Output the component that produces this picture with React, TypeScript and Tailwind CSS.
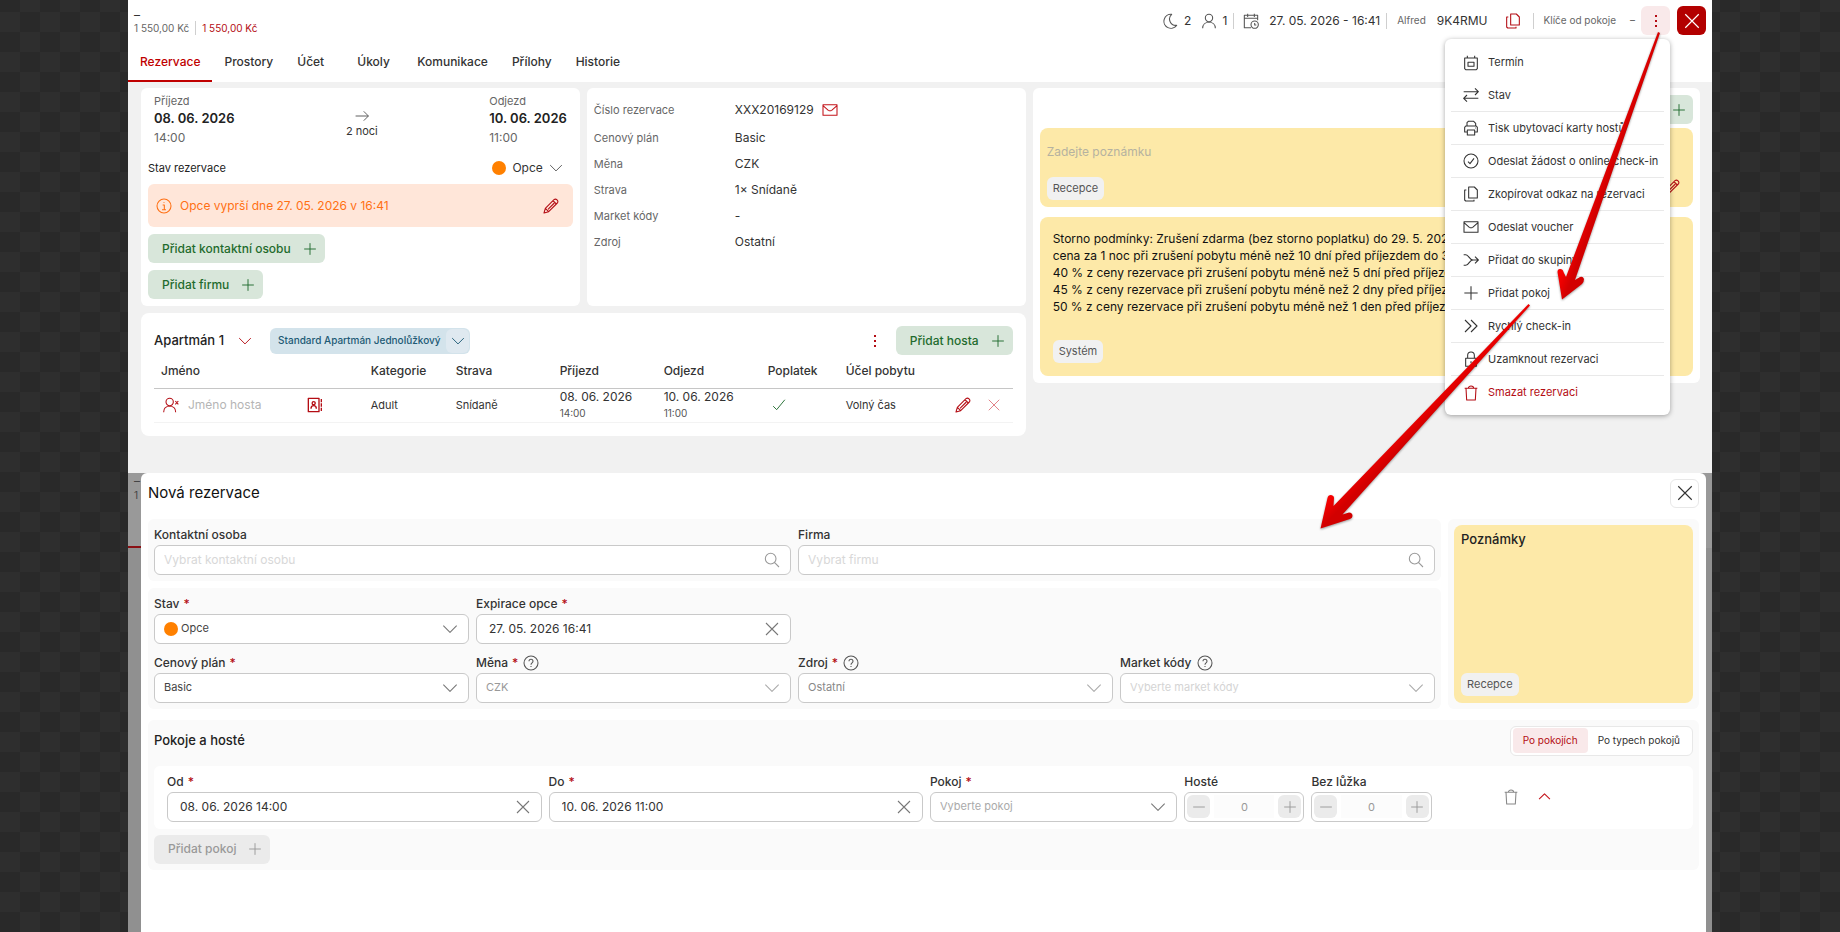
import { ReactNode, useState } from "react";
import clsx from "clsx";

const icons = {
  moon: "M14.5 2A10.5 10.5 0 1 0 22 18.5A9.5 9.5 0 0 1 14.5 2Z",
  user: "M12 13a5.5 5.5 0 1 0 0-11a5.5 5.5 0 0 0 0 11Z M2.500 23c0-5.5 4-9 9.500-9s9.500 3.500 9.500 9",
  calendarClock:
    "M7 1v5M17 1v5M2 8h20M12 22H2V3.500h20V11M17.500 23a5.500 5.500 0 1 0 0-11a5.500 5.500 0 0 0 0 11ZM17.500 15v3h2.500",
  calendar: "M2.500 4.500h19v16l-1.500 1.500h-16L2.500 20.500ZM6.500 1v3.500M17.500 1v3.500M7.500 11h9v6h-9Z",
  copy: "M8.500 1.500h8.500l4.500 4.500V18H8.500Z M5 6H2.500v15L4 22.500h12.500v-2",
  mail: "M1.500 4h21v16h-21Z M1.500 5.500l8 7q2.500 1.500 5 0l8-7",
  close: "M3 3l18 18M21 3L3 21",
  plus: "M12 2v20M2 12h20",
  minus: "M2 12h20",
  chevronDown: "M2 7l10 10L22 7",
  chevronUp: "M2 17L12 7l10 10",
  arrowRight: "M1 12h22M15 4l8 8l-8 8",
  swap: "M1 7h22M18 2l5 5l-5 5M23 17H1M6 12l-5 5l5 5",
  printer: "M6 9V4l2-2h8l3 3v4M6 18H2.500V11L4 9h16l1.500 2v7H18M6.500 15h11v7.500h-11ZM18 12h1",
  check: "M2 14l6 6L22 3",
  checkCircle: "M12 22.500a10.500 10.500 0 1 0 0-21a10.500 10.500 0 0 0 0 21ZM7.500 13l3 3l6-8",
  merge: "M1 4h3c5 0 5 8 11 8h8M1 20h3c5 0 5-8 11-8M18 7l5 5l-5 5",
  forward: "M3 3l9 9l-9 9M12 3l9 9l-9 9",
  lock: "M4 11h16v12H4ZM7 11V6.500a5 5 0 0 1 10 0V11M12 15.500v3",
  trash: "M2.500 5h19M8 5c0-4.500 8-4.500 8 0M4.500 5l1 17.500h13l1-17.500",
  pencil: "M1.500 22.500l2-7L16.500 2.500c3-2.500 7.500 2 5 5L8.500 20.500ZM3.500 15.500l5 5M15 4l5 5M7.500 17L17 7.500",
  info: "M12 22.500a10.500 10.500 0 1 0 0-21a10.500 10.500 0 0 0 0 21ZM10 10.500h2.500V17M9 17.500h6M12 6.500v1",
  help: "M12 22.500a10.500 10.500 0 1 0 0-21a10.500 10.500 0 0 0 0 21ZM9 9.500c0-4 6-4 6 0c0 2.500-3 2-3 5M12 16.500v1.500",
  search: "M10 18a8 8 0 1 0 0-16a8 8 0 0 0 0 16ZM16 16l6.500 6.500",
  userX: "M10 13a5.500 5.500 0 1 0 0-11a5.500 5.500 0 0 0 0 11ZM1 23c0-5.500 3.500-9 9-9s9 3.500 9 9M18.500 6l4.500 5M23 6l-4.500 5",
  contacts:
    "M2 2h16v20H2ZM21.500 3v5M21.500 9.500v5M21.500 16v5M10 11.500a2.300 2.300 0 1 0 0-4.600a2.300 2.300 0 0 0 0 4.600ZM6 17.500c0-6 8-6 8 0",
};

type IconName = keyof typeof icons;

function Icon({ name, size = 16, stroke = 1.6, className }: { name: IconName; size?: number; stroke?: number; className?: string }) {
  return (
    <svg
      width={size}
      height={size}
      viewBox="0 0 24 24"
      fill="none"
      stroke="currentColor"
      strokeWidth={stroke}
      strokeLinejoin="round"
      aria-hidden="true"
      className={clsx("shrink-0", className)}
    >
      <path d={icons[name]} />
    </svg>
  );
}

function Dots() {
  return (
    <svg width="14" height="14" viewBox="0 0 14 14" fill="currentColor" aria-hidden="true">
      <rect x="6" y="1" width="2" height="2" />
      <rect x="6" y="6" width="2" height="2" />
      <rect x="6" y="11" width="2" height="2" />
    </svg>
  );
}

const tabs = ["Rezervace", "Prostory", "Účet", "Úkoly", "Komunikace", "Přílohy", "Historie"];

const menuItems: { label: string; icon: IconName; line?: boolean; danger?: boolean }[] = [
  { label: "Termín", icon: "calendar" },
  { label: "Stav", icon: "swap", line: true },
  { label: "Tisk ubytovací karty hostů", icon: "printer", line: true },
  { label: "Odeslat žádost o online check-in", icon: "checkCircle", line: true },
  { label: "Zkopírovat odkaz na rezervaci", icon: "copy", line: true },
  { label: "Odeslat voucher", icon: "mail", line: true },
  { label: "Přidat do skupiny", icon: "merge", line: true },
  { label: "Přidat pokoj", icon: "plus", line: true },
  { label: "Rychlý check-in", icon: "forward", line: true },
  { label: "Uzamknout rezervaci", icon: "lock", line: true },
  { label: "Smazat rezervaci", icon: "trash", danger: true },
];

const details = [
  { label: "Cenový plán", value: "Basic" },
  { label: "Měna", value: "CZK" },
  { label: "Strava", value: "1× Snídaně" },
  { label: "Market kódy", value: "-" },
  { label: "Zdroj", value: "Ostatní" },
];

const stornoLines = [
  "Storno podmínky: Zrušení zdarma (bez storno poplatku) do 29. 5. 2026",
  "cena za 1 noc při zrušení pobytu méně než 10 dní před příjezdem do 3. 6.",
  "40 % z ceny rezervace při zrušení pobytu méně než 5 dní před příjezdem",
  "45 % z ceny rezervace při zrušení pobytu méně než 2 dny před příjezdem",
  "50 % z ceny rezervace při zrušení pobytu méně než 1 den před příjezdem",
];

function Divider() {
  return <span className="h-4 w-px bg-[#cfcfcf]" />;
}

function AddButton({ children, disabled }: { children: ReactNode; disabled?: boolean }) {
  return (
    <button
      disabled={disabled}
      className={clsx(
        "flex h-[29px] w-fit items-center gap-3 rounded-md pr-2 pl-3.5 text-xs font-medium",
        disabled ? "bg-[#ebebeb] text-[#999]" : "bg-[#d8e6da] text-[#1f6b2d]"
      )}
    >
      {children}
      <Icon name="plus" size={14} />
    </button>
  );
}

function Chip({ children }: { children: ReactNode }) {
  return <span className="flex h-[23px] w-fit items-center rounded-md bg-[#f1f1f1] px-[6px] text-[11px] text-[#555]">{children}</span>;
}

function ReservationMenu() {
  return (
    <div className="absolute top-[33px] right-0 z-10 w-[225px] rounded-md bg-white px-[6px] pt-[7px] pb-[6px] shadow-[0_1px_5px_rgba(0,0,0,0.35)]">
      {menuItems.map((item) => (
        <button
          key={item.label}
          className={clsx(
            "flex h-[33px] w-full items-center gap-[9px] pl-3 text-left text-[11px] whitespace-nowrap",
            item.line && "border-b border-[#e9e9e9]",
            item.danger ? "text-[#b40d14]" : "text-[#333]"
          )}
        >
          <Icon name={item.icon} />
          {item.label}
        </button>
      ))}
    </div>
  );
}

function Header() {
  const [active, setActive] = useState("Rezervace");
  const [open, setOpen] = useState(true);

  return (
    <header className="bg-white">
      <div className="flex h-[44px] items-start justify-between pr-[6px] pl-[6px]">
        <div className="pt-[9px] text-[10px] leading-3">
          <div className="text-xs leading-3 text-[#333]">–</div>
          <div className="flex items-center gap-[6px] text-[#666]">
            1 550,00 Kč <span className="h-3.5 w-px bg-[#cfcfcf]" /> <span className="text-[#b40d14]">1 550,00 Kč</span>
          </div>
        </div>
        <div className="flex items-center pt-[6px] text-xs text-[#333]">
          <Icon name="moon" className="mr-[6px] text-[#555]" />
          <span className="mr-2.5">2</span>
          <Icon name="user" className="mr-[5px] text-[#555]" />
          <span className="mr-[6px]">1</span>
          <Divider />
          <Icon name="calendarClock" className="mr-2.5 ml-[9px] text-[#555]" />
          <span className="mr-[6px]">27. 05. 2026 - 16:41</span>
          <Divider />
          <span className="mr-[11px] ml-2.5 text-[10px] text-[#666]">Alfred</span>
          <span className="mr-[17px]">9K4RMU</span>
          <button aria-label="Kopírovat" className="mr-3 text-[#b40d14]">
            <Icon name="copy" />
          </button>
          <Divider />
          <span className="mr-3.5 ml-2.5 text-[10px] text-[#666]">Klíče od pokoje</span>
          <span className="mr-[6px] text-[10px] text-[#555]">–</span>
          <div className="relative mr-[7px]">
            <button
              aria-label="Menu"
              onClick={() => setOpen(!open)}
              className="flex size-[29px] items-center justify-center rounded-md bg-[#f9e9ea] text-[#b40d14]"
            >
              <Dots />
            </button>
            {open && <ReservationMenu />}
          </div>
          <button aria-label="Zavřít" className="flex size-[29px] items-center justify-center rounded-md bg-[#b30000] text-white">
            <Icon name="close" size={18} />
          </button>
        </div>
      </div>
      <nav className="flex">
        {tabs.map((tab) => (
          <button
            key={tab}
            onClick={() => setActive(tab)}
            className={clsx(
              "h-[38px] min-w-[60px] border-b-2 px-3 text-left text-xs font-medium",
              active === tab ? "border-[#c00000] text-[#c00000]" : "border-transparent text-[#333]"
            )}
          >
            {tab}
          </button>
        ))}
      </nav>
    </header>
  );
}

function StayCard() {
  return (
    <section className="rounded-md bg-white p-[7px]">
      <div className="flex items-start justify-between px-[6px]">
        <div>
          <div className="text-[11px] leading-3 text-[#666]">Příjezd</div>
          <div className="text-[13px] leading-[22px] font-semibold text-[#222]">08. 06. 2026</div>
          <div className="text-xs leading-[18px] text-[#666]">14:00</div>
        </div>
        <div className="flex flex-col items-center pt-[14px] text-[11px] text-[#333]">
          <Icon name="arrowRight" size={14} className="text-[#555]" />
          2 noci
        </div>
        <div>
          <div className="text-[11px] leading-3 text-[#666]">Odjezd</div>
          <div className="text-[13px] leading-[22px] font-semibold text-[#222]">10. 06. 2026</div>
          <div className="text-xs leading-[18px] text-[#666]">11:00</div>
        </div>
      </div>
      <div className="mt-[7px] flex h-7 items-center justify-between text-[11px] text-[#222]">
        Stav rezervace
        <button className="flex items-center gap-[6px] pr-2.5 text-xs text-[#333]">
          <span className="size-3.5 rounded-full bg-[#ff8000]" />
          Opce
          <Icon name="chevronDown" size={14} className="text-[#555]" />
        </button>
      </div>
      <div className="mt-[2px] flex h-[43px] items-center rounded-md bg-[#ffe6d9] px-2 text-xs text-[#ff7014]">
        <Icon name="info" />
        <span className="ml-2 flex-1">Opce vyprší dne 27. 05. 2026 v 16:41</span>
        <button aria-label="Upravit" className="pr-[6px] text-[#b40d14]">
          <Icon name="pencil" />
        </button>
      </div>
      <div className="mt-[7px] flex flex-col gap-[7px]">
        <AddButton>Přidat kontaktní osobu</AddButton>
        <AddButton>Přidat firmu</AddButton>
      </div>
    </section>
  );
}

function DetailCard() {
  return (
    <section className="rounded-md bg-white p-[7px]">
      <dl className="text-xs text-[#333]">
        <div className="flex h-[30px] items-center">
          <dt className="w-[141px] text-[11px] text-[#666]">Číslo rezervace</dt>
          <dd className="flex items-center gap-2">
            XXX20169129 <Icon name="mail" className="text-[#c4141b]" />
          </dd>
        </div>
        {details.map((d) => (
          <div key={d.label} className="flex h-[26px] items-center">
            <dt className="w-[141px] text-[11px] text-[#666]">{d.label}</dt>
            <dd>{d.value}</dd>
          </div>
        ))}
      </dl>
    </section>
  );
}

function GuestsCard() {
  return (
    <section className="rounded-lg bg-white p-[13px]">
      <div className="flex items-center">
        <h2 className="text-[13px] font-medium text-[#222]">Apartmán 1</h2>
        <button aria-label="Sbalit" className="ml-3.5 text-[#b40d14]">
          <Icon name="chevronDown" size={14} />
        </button>
        <button className="ml-[18px] flex h-[26px] items-center gap-[6px] rounded-md bg-[#d3e3eb] pr-px pl-2 text-[10px] font-medium text-[#1d5a75]">
          Standard Apartmán Jednolůžkový
          <span className="flex h-6 w-[23px] items-center justify-center rounded-md bg-[#dfe9f0]">
            <Icon name="chevronDown" size={14} />
          </span>
        </button>
        <button aria-label="Další" className="mr-3.5 ml-auto text-[#b40d14]">
          <Dots />
        </button>
        <AddButton>Přidat hosta</AddButton>
      </div>
      <table className="w-full table-fixed text-left text-xs text-[#333]">
        <thead>
          <tr className="h-[33px] border-b border-[#c6c6c6] [&>th]:pl-[7px] [&>th]:font-medium">
            <th>Jméno</th>
            <th className="w-[85px]">Kategorie</th>
            <th className="w-[104px]">Strava</th>
            <th className="w-[104px]">Příjezd</th>
            <th className="w-[104px]">Odjezd</th>
            <th className="w-[78px]">Poplatek</th>
            <th className="w-[109px]">Účel pobytu</th>
            <th className="w-[65px]" aria-label="Akce" />
          </tr>
        </thead>
        <tbody>
          <tr className="h-[34px] border-b border-[#f3f3f3] [&>td]:pl-[7px]">
            <td>
              <div className="flex items-center pr-[41px] pl-[2px]">
                <Icon name="userX" className="text-[#b40d14]" />
                <input aria-label="Jméno hosta" placeholder="Jméno hosta" className="ml-[9px] min-w-0 flex-1 outline-none placeholder:text-[#b5b5b5]" />
                <button aria-label="Kontakty" className="text-[#b40d14]">
                  <Icon name="contacts" stroke={2} />
                </button>
              </div>
            </td>
            <td className="text-[11px]">Adult</td>
            <td className="text-[11px]">Snídaně</td>
            <td>
              <div className="leading-4">08. 06. 2026</div>
              <div className="text-[10px] leading-4 text-[#555]">14:00</div>
            </td>
            <td>
              <div className="leading-4">10. 06. 2026</div>
              <div className="text-[10px] leading-4 text-[#555]">11:00</div>
            </td>
            <td>
              <Icon name="check" size={14} className="ml-1 text-[#1f6b2d]" />
            </td>
            <td className="text-[11px]">Volný čas</td>
            <td>
              <div className="flex items-center gap-4">
                <button aria-label="Upravit hosta" className="text-[#b40d14]">
                  <Icon name="pencil" />
                </button>
                <button aria-label="Odebrat hosta" className="text-[#e07a80]">
                  <Icon name="close" size={14} />
                </button>
              </div>
            </td>
          </tr>
        </tbody>
      </table>
    </section>
  );
}

function NotesCard() {
  return (
    <section className="flex flex-col self-start rounded-md bg-white p-[7px]">
      <button aria-label="Přidat poznámku" className="flex size-[29px] items-center justify-center self-end rounded-md bg-[#d8e6da] text-[#1f6b2d]">
        <Icon name="plus" size={14} />
      </button>
      <div className="mt-1 rounded-lg bg-[#fde9a8] p-[7px]">
        <input aria-label="Poznámka" placeholder="Zadejte poznámku" className="block h-8 w-full text-xs outline-none placeholder:text-[#b5b2a0]" />
        <div className="mt-[10px] flex items-center justify-between pr-[6px]">
          <Chip>Recepce</Chip>
          <button aria-label="Upravit poznámku" className="pb-1 text-[#b40d14]">
            <Icon name="pencil" />
          </button>
        </div>
      </div>
      <div className="mt-[10px] rounded-lg bg-[#fde9a8] p-[13px]">
        <div className="overflow-hidden text-xs leading-[17px] whitespace-nowrap text-[#111]">
          {stornoLines.map((line) => (
            <p key={line}>{line}</p>
          ))}
        </div>
        <div className="mt-[25px]">
          <Chip>Systém</Chip>
        </div>
      </div>
    </section>
  );
}

function Label({ id, text, required, help }: { id: string; text: string; required?: boolean; help?: boolean }) {
  return (
    <label htmlFor={id} className="flex h-5 items-center gap-1 text-xs font-medium text-[#333]">
      {text}
      {required && <span className="text-[#b40d14]">*</span>}
      {help && <Icon name="help" className="ml-px text-[#555]" />}
    </label>
  );
}

type FieldProps = { id: string; label: string; required?: boolean; help?: boolean; className?: string };

function TextField({ id, label, required, value, placeholder, icon, className }: FieldProps & { value?: string; placeholder?: string; icon: IconName }) {
  return (
    <div className={className}>
      <Label id={id} text={label} required={required} />
      <div className="flex h-[30px] items-center rounded-md border border-[#c9c9c9] bg-white pr-2.5">
        <input
          id={id}
          defaultValue={value}
          placeholder={placeholder}
          className={clsx("min-w-0 flex-1 text-xs text-[#333] outline-none placeholder:text-[#d8d8d8]", value ? "pl-3" : "pl-[9px]")}
        />
        <Icon name={icon} className={icon === "search" ? "text-[#999]" : "text-[#777]"} />
      </div>
    </div>
  );
}

function SelectField({ id, label, required, help, value, tone = "text-[#444]", arrow = "text-[#777]", dot, className }: FieldProps & { value: string; tone?: string; arrow?: string; dot?: boolean }) {
  return (
    <div className={className}>
      <Label id={id} text={label} required={required} help={help} />
      <div className="flex h-[30px] items-center rounded-md border border-[#c9c9c9] bg-white pr-2.5 pl-[9px]">
        {dot && <span className="mr-[3px] size-3.5 rounded-full bg-[#ff8000]" />}
        <select id={id} className={clsx("h-full min-w-0 flex-1 appearance-none text-[11px] outline-none", tone)}>
          <option>{value}</option>
        </select>
        <Icon name="chevronDown" className={clsx("pointer-events-none", arrow)} />
      </div>
    </div>
  );
}

function Counter({ id, label }: { id: string; label: string }) {
  return (
    <div>
      <Label id={id} text={label} />
      <div className="flex h-[30px] items-center rounded-md border border-[#c9c9c9] bg-white px-[2px] text-[#999]">
        <button aria-label={`${label} minus`} className="flex size-[23px] items-center justify-center rounded-md bg-[#ebebeb]">
          <Icon name="minus" size={14} />
        </button>
        <input id={id} defaultValue="0" className="mx-1 h-[23px] min-w-0 flex-1 bg-[#fcfcfc] text-center text-[11px] outline-none" />
        <button aria-label={`${label} plus`} className="flex size-[23px] items-center justify-center rounded-md bg-[#ebebeb]">
          <Icon name="plus" size={14} />
        </button>
      </div>
    </div>
  );
}

function NewReservation() {
  const [byRoom, setByRoom] = useState(true);

  return (
    <div className="flex-1 rounded-t-md bg-white px-[7px] pt-[6px]">
      <div className="flex items-center justify-between">
        <h1 className="text-[15px] text-[#111]">Nová rezervace</h1>
        <button aria-label="Zavřít" className="flex size-[29px] items-center justify-center rounded-md border border-[#e8e8e8] text-[#333]">
          <Icon name="close" size={18} stroke={1.5} />
        </button>
      </div>

      <div className="mt-[11px] grid grid-cols-[67fr_13fr] gap-[7px]">
        <div className="flex flex-col gap-[7px]">
          <div className="grid grid-cols-2 gap-[7px] rounded-md bg-[#fafafa] p-[6px]">
            <TextField id="contact" label="Kontaktní osoba" placeholder="Vybrat kontaktní osobu" icon="search" />
            <TextField id="company" label="Firma" placeholder="Vybrat firmu" icon="search" />
          </div>
          <div className="grid grid-cols-4 gap-x-[7px] gap-y-[9px] rounded-md bg-[#fafafa] p-[6px]">
            <SelectField id="status" label="Stav" required value="Opce" dot />
            <TextField id="expiration" label="Expirace opce" required value="27. 05. 2026 16:41" icon="close" />
            <SelectField id="plan" label="Cenový plán" required value="Basic" className="col-start-1" />
            <SelectField id="currency" label="Měna" required help value="CZK" tone="text-[#999]" arrow="text-[#aaa]" />
            <SelectField id="source" label="Zdroj" required help value="Ostatní" tone="text-[#888]" arrow="text-[#aaa]" />
            <SelectField id="market" label="Market kódy" help value="Vyberte market kódy" tone="text-[#d4d4d4]" arrow="text-[#aaa]" />
          </div>
        </div>
        <div className="flex rounded-md bg-[#fafafa] p-[6px]">
          <div className="flex flex-1 flex-col justify-between rounded-lg bg-[#fde9a8] p-[7px]">
            <h2 className="text-[13px] leading-[15px] font-medium text-[#222]">Poznámky</h2>
            <Chip>Recepce</Chip>
          </div>
        </div>
      </div>

      <section className="mt-[11px] rounded-md bg-[#fafafa] p-[6px]">
        <div className="flex items-center justify-between">
          <h2 className="text-[13px] font-medium text-[#222]">Pokoje a hosté</h2>
          <div className="flex h-[30px] items-center rounded-md border border-[#e8e8e8] bg-white px-[2px] text-[10px]">
            <button
              onClick={() => setByRoom(true)}
              className={clsx("h-[25px] rounded-sm px-2.5", byRoom ? "bg-[#f9e9ea] text-[#b40d14]" : "text-[#333]")}
            >
              Po pokojích
            </button>
            <button
              onClick={() => setByRoom(false)}
              className={clsx("h-[25px] rounded-sm px-2.5", byRoom ? "text-[#333]" : "bg-[#f9e9ea] text-[#b40d14]")}
            >
              Po typech pokojů
            </button>
          </div>
        </div>
        <div className="mt-[10px] grid grid-cols-12 gap-[7px] rounded-md bg-white pt-[6px] pr-[7px] pb-[7px] pl-[13px]">
          <TextField id="from" label="Od" required value="08. 06. 2026 14:00" icon="close" className="col-span-3" />
          <TextField id="to" label="Do" required value="10. 06. 2026 11:00" icon="close" className="col-span-3" />
          <SelectField id="room" label="Pokoj" required value="Vyberte pokoj" tone="text-[#aaa]" className="col-span-2" />
          <Counter id="guests" label="Hosté" />
          <Counter id="nobed" label="Bez lůžka" />
          <div className="col-span-2 flex items-center gap-[19px] pl-16">
            <button aria-label="Smazat pokoj" className="text-[#888]">
              <Icon name="trash" />
            </button>
            <button aria-label="Sbalit pokoj" className="text-[#c4141b]">
              <Icon name="chevronUp" stroke={2} size={13} />
            </button>
          </div>
        </div>
        <div className="mt-[6px]">
          <AddButton disabled>Přidat pokoj</AddButton>
        </div>
      </section>
    </div>
  );
}

// red guide arrows: menu button -> "Přidat pokoj" -> new reservation form
function GuideArrows() {
  return (
    <svg
      width="400"
      height="540"
      viewBox="1312 0 400 540"
      aria-hidden="true"
      className="pointer-events-none absolute top-0 right-0 z-20 drop-shadow-[0_1px_1px_rgba(0,0,0,0.4)]"
    >
      <defs>
        <linearGradient id="guide1" gradientUnits="userSpaceOnUse" x1="1606" y1="150" x2="1617" y2="154">
          <stop offset="0" stopColor="#f80000" />
          <stop offset="1" stopColor="#d20000" />
        </linearGradient>
        <linearGradient id="guide2" gradientUnits="userSpaceOnUse" x1="1425" y1="402" x2="1436" y2="413">
          <stop offset="0" stopColor="#f80000" />
          <stop offset="1" stopColor="#d20000" />
        </linearGradient>
      </defs>
      <path
        fill="url(#guide1)"
        d="M1658 32L1660 33L1575 280L1580 277Q1583 276 1584 279Q1584 282 1582 284L1562 299.500L1557.500 272Q1557.500 269 1560 269Q1563 269 1563.500 272L1566 277Z"
      />
      <path
        fill="url(#guide2)"
        d="M1528.500 304L1530 305.500L1342.500 514.500L1349 512.500Q1352.500 512.500 1352.500 516Q1352.500 518 1350 519L1320.500 528.500L1327.500 498Q1328 495 1331 495Q1334 495.500 1334 498L1333.500 506Z"
      />
    </svg>
  );
}

export default function App() {
  return (
    <div className="min-h-screen bg-[repeating-conic-gradient(#292929_0_25%,#2e2e2e_0_50%)] bg-[length:40px_40px] bg-[position:0_12px] px-32 font-[Inter,sans-serif]">
      <main className="relative flex min-h-screen flex-col bg-[#f1f1f1]">
        <Header />
        <div className="grid grid-cols-[57fr_43fr] gap-[7px] pt-[6px] pr-3 pb-[37px] pl-[13px]">
          <div className="flex flex-col gap-[7px]">
            <div className="grid grid-cols-2 gap-[7px]">
              <StayCard />
              <DetailCard />
            </div>
            <GuestsCard />
          </div>
          <NotesCard />
        </div>
        <div className="flex flex-1 bg-[linear-gradient(#999_75px,#909090_75px)] pr-[6px]">
          <div className="h-[75px] w-[13px] border-b-2 border-[#8a1014] pl-[6px] text-[10px] leading-[13px] text-[#444]">
            <div className="text-xs leading-4">–</div>
            <div>1</div>
          </div>
          <NewReservation />
        </div>
        <GuideArrows />
      </main>
    </div>
  );
}
